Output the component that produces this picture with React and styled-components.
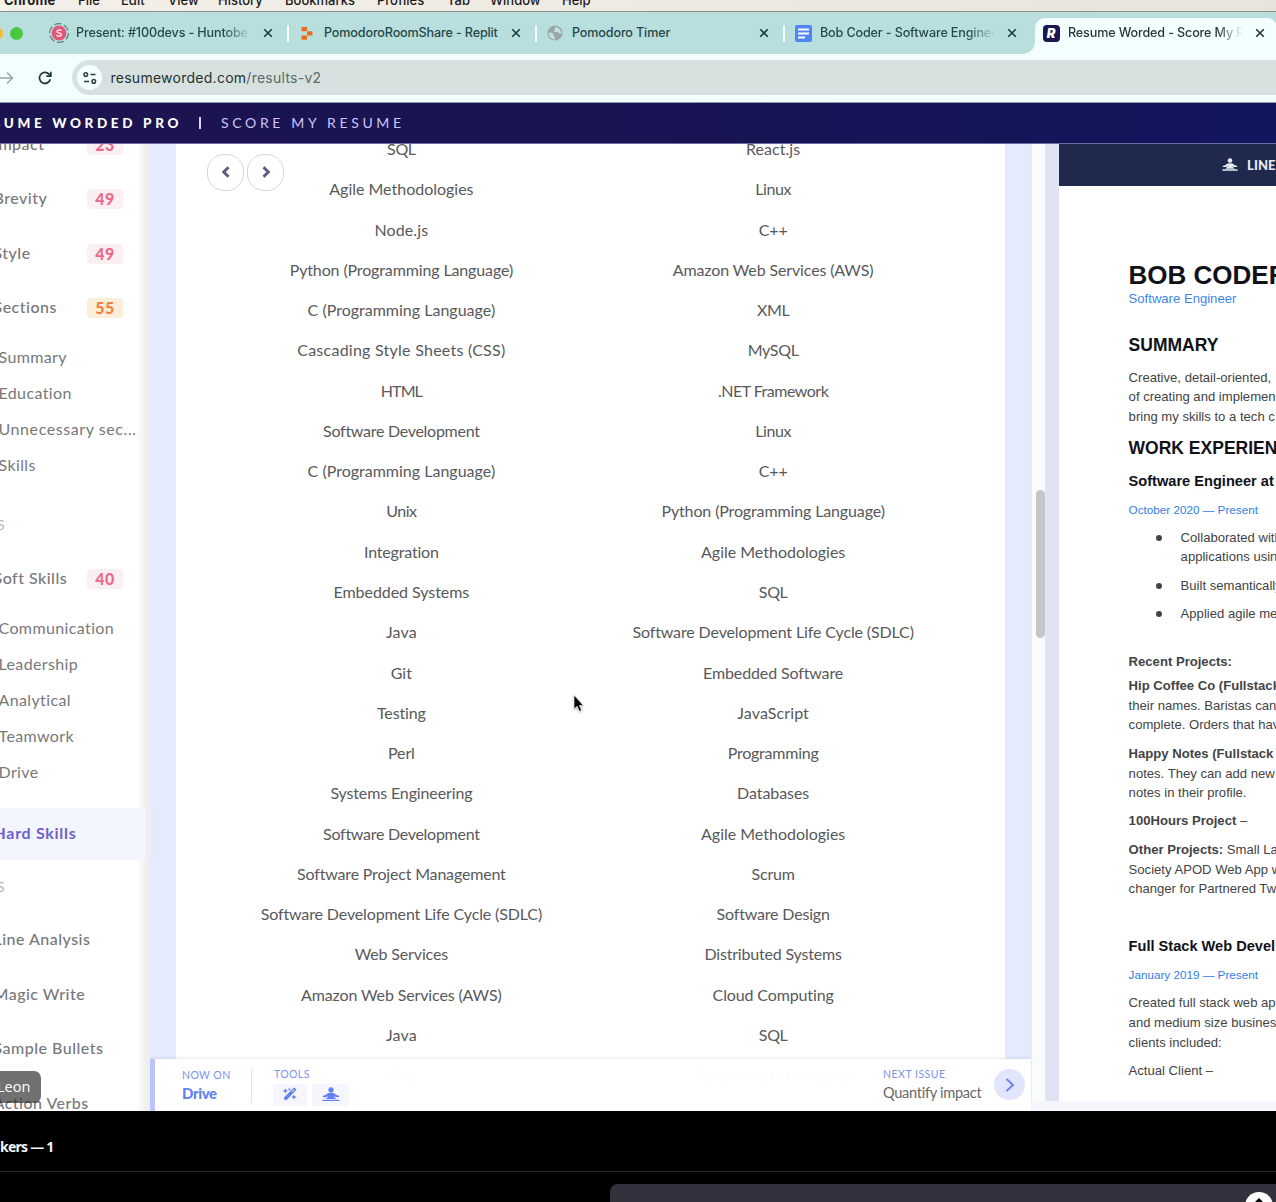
import React from "react";
import styled, { createGlobalStyle } from "styled-components";
import { FaWandMagicSparkles } from "react-icons/fa6";

const SITE = '"Lato", "Liberation Sans", sans-serif';
const CHROME = '"Inter", "Liberation Sans", sans-serif';

const GlobalStyle = createGlobalStyle`
  *, *::before, *::after { box-sizing: border-box; }
  html, body { margin: 0; padding: 0; background: #000; overflow: hidden; }
  ul { list-style: none; margin: 0; padding: 0; }
  button { border: 0; padding: 0; background: none; font: inherit; }
  svg { display: block; flex: none; }
`;

const Page = styled.div`
  display: flex;
  flex-direction: column;
  width: 1276px;
  height: 1202px;
  overflow: hidden;
  background: #000;
`;

/* ---------- macOS menu bar ---------- */
const MenuBar = styled.header`
  display: flex;
  align-items: flex-end;
  flex: none;
  height: 12px;
  padding-bottom: 3.5px;
  gap: 22px;
  overflow: hidden;
  background: linear-gradient(90deg, #f3f0e9, #e8e4db);
  border-bottom: 1px solid #8a8f8c;
  font: 500 13px/16px ${CHROME};
  color: #1c1b1a;
`;
const MenuItem = styled.span`
  flex: none;
  width: ${(p) => p.$w}px;
  margin-left: ${(p) => p.$offset || 0}px;
  font-weight: ${(p) => (p.$strong ? 700 : 500)};
  letter-spacing: ${(p) => (p.$strong ? 0.2 : 0)}px;
  white-space: nowrap;
`;

/* ---------- Browser chrome ---------- */
const TabStrip = styled.nav`
  display: flex;
  align-items: flex-end;
  flex: none;
  height: 42px;
  background: #b8dfdd;
`;
const WindowControls = styled.div`
  display: flex;
  align-items: center;
  gap: 7px;
  width: 39px;
  height: 42px;
  flex: none;
`;
const Light = styled.span`
  flex: none;
  width: 13px;
  height: 13px;
  margin-left: ${(p) => p.$shift || 0}px;
  border-radius: 50%;
  background: ${(p) => p.$color};
`;
const Tab = styled.div`
  display: flex;
  align-items: center;
  flex: none;
  position: relative;
  width: 248px;
  height: 42px;
  padding-left: 12px;
  color: #27484a;
`;
const ActiveTab = styled(Tab)`
  width: 242px;
  height: 36px;
  padding-left: 8px;
  padding-bottom: 6px;
  margin-left: 4px;
  border-radius: 10px 10px 0 0;
  background: #f2fffe;
  color: #26383a;
  &::before {
    content: "";
    position: absolute;
    left: -12px;
    bottom: 0;
    width: 12px;
    height: 12px;
    background: radial-gradient(circle at 0 0, transparent 11.5px, #f2fffe 12px);
  }
`;
const TabIcon = styled.span`
  display: flex;
  align-items: center;
  justify-content: center;
  flex: none;
  width: 16px;
  height: 16px;
  margin-right: 9px;
`;
const TabTitle = styled.span`
  flex: none;
  width: 175px;
  margin-right: -2px;
  overflow: hidden;
  white-space: nowrap;
  font: 500 12.6px/18px ${CHROME};
  letter-spacing: -0.15px;
  mask-image: ${(p) => (p.$fade ? "linear-gradient(90deg, #000 148px, transparent 175px)" : "none")};
`;
const TabClose = styled.button`
  flex: none;
  margin-left: 13.5px;
  color: #1d3a3c;
`;
const TabDivider = styled.span`
  flex: none;
  width: 2px;
  height: 17px;
  margin-left: 14px;
  border-radius: 1px;
  background: #f6ffff;
`;
const ResumeFavicon = styled.span`
  display: flex;
  align-items: center;
  justify-content: center;
  flex: none;
  width: 17px;
  height: 17px;
  border-radius: 4px;
  background: #1b1550;
  color: #fff;
  font: italic 900 13px/17px ${CHROME};
`;
const Toolbar = styled.div`
  display: flex;
  align-items: center;
  flex: none;
  height: 49px;
  padding-bottom: 1px;
  background: #f2fffe;
  border-bottom: 1px solid #8b9a9f;
`;
const NavIcons = styled.div`
  display: flex;
  align-items: center;
  gap: 24px;
  width: 72px;
  flex: none;
`;
const AddressBar = styled.div`
  display: flex;
  align-items: center;
  flex: 1;
  height: 35px;
  padding-left: 5px;
  border-radius: 18px 0 0 18px;
  background: #d6e1e0;
`;
const SiteInfo = styled.button`
  display: flex;
  align-items: center;
  justify-content: center;
  width: 25px;
  height: 25px;
  border-radius: 50%;
  background: #f2fffe;
`;
const Url = styled.span`
  margin-left: 8.5px;
  font: 400 14px/20px ${CHROME};
  letter-spacing: 0.26px;
  color: #24312f;
  span { color: #5d6a69; }
`;

/* ---------- Site banner ---------- */
const Banner = styled.div`
  display: flex;
  align-items: center;
  flex: none;
  height: 41px;
  background: linear-gradient(90deg, #1b1451 0%, #1a1452 45%, #11165e 100%);
  border-bottom: 1px solid #6e67a0;
  font: 400 14px/18px ${SITE};
  color: #cdc5fb;
`;
const Brand = styled.strong`
  display: flex;
  justify-content: flex-end;
  flex: none;
  width: 182px;
  color: #fff;
  font-weight: 900;
  font-size: 13.5px;
  letter-spacing: 3.65px;
  white-space: nowrap;
  overflow: hidden;
`;
const BannerRule = styled.span`
  width: 1.5px;
  height: 12px;
  margin: 0 20.5px 0 17px;
  background: #dcd7f5;
`;
const BannerTitle = styled.span`
  letter-spacing: 3.65px;
  white-space: nowrap;
`;

/* ---------- Workspace ---------- */
const Workspace = styled.div`
  display: flex;
  flex: none;
  position: relative;
  height: 967px;
  overflow: hidden;
  background: #fff;
`;
const Sidebar = styled.aside`
  flex: none;
  width: 150px;
  height: 967px;
  overflow: hidden;
  background: linear-gradient(90deg, #fff 136px, #efefef 146px, #efefef 150px);
  font-family: ${SITE};
  color: #77787b;
`;
const SideNav = styled.div`
  margin-top: -26.75px;
`;
const SideItem = styled.div`
  display: flex;
  align-items: center;
  width: 145px;
  height: ${(p) => (p.$active ? 52.5 : 54.5)}px;
  margin-top: ${(p) => (p.$active ? 16.5 : 0)}px;
  padding-right: 22px;
  background: ${(p) => (p.$active ? "#f3f6ff" : "transparent")};
  color: ${(p) => (p.$active ? "#6f5fcb" : "inherit")};
  font-weight: ${(p) => (p.$active ? 700 : 500)};
  letter-spacing: ${(p) => (p.$active ? 0.7 : 0.48)}px;
`;
const SideLabel = styled.span`
  flex: 1;
  margin-left: -6.5px;
  padding-bottom: 2px;
  font-size: 16px;
  line-height: 20px;
  white-space: nowrap;
`;
const Score = styled.span`
  flex: none;
  width: 36px;
  height: 20px;
  border-radius: 4px;
  background: ${(p) => (p.$warm ? "#fdeeda" : "#fbf0f1")};
  color: ${(p) => (p.$warm ? "#ee8440" : "#ea6a90")};
  font: 900 16px/20px ${SITE};
  letter-spacing: 0.4px;
  text-align: center;
`;
const SubList = styled.ul`
  padding-top: 5px;
`;
const SubItem = styled.li`
  height: 36px;
  margin-left: -1.5px;
  font-size: 16px;
  line-height: 34px;
  letter-spacing: ${(p) => (p.$wide ? 0.58 : 0.38)}px;
  white-space: nowrap;
`;
const SideHeading = styled.div`
  display: flex;
  align-items: center;
  height: ${(p) => p.$h}px;
  padding-top: ${(p) => p.$top}px;
  margin-left: -3px;
  font-size: 14px;
  color: #b3b4b6;
`;
const NameTag = styled.div`
  position: absolute;
  left: -8px;
  top: 927px;
  width: 49px;
  height: 32px;
  padding-left: 5px;
  border-radius: 7px;
  background: rgba(40, 40, 40, 0.66);
  color: #fff;
  font: 400 14.5px/31px "Open Sans", "Noto Sans", sans-serif;
`;

const Main = styled.main`
  display: flex;
  flex: none;
  position: relative;
  width: 881px;
  height: 967px;
  padding: 0 26px;
  overflow: hidden;
  background: #e6eaff;
`;
const Card = styled.section`
  flex: 1;
  padding: 0 46px 0 39.5px;
  background: #fff;
`;
const SkillTable = styled.div`
  margin-top: -15.05px;
  font: 400 16px/20px ${SITE};
  color: #58595b;
`;
const SkillRow = styled.div`
  display: grid;
  grid-template-columns: 1fr 1fr;
  align-items: center;
  height: 40.28px;
  text-align: center;
`;
const SkillName = styled.span`
  letter-spacing: ${(p) => p.$track}px;
  white-space: nowrap;
`;
const Pager = styled.div`
  display: flex;
  gap: 3px;
  position: absolute;
  left: 57px;
  top: 10px;
`;
const PagerButton = styled.button`
  display: flex;
  align-items: center;
  justify-content: center;
  width: 37px;
  height: 37px;
  padding-bottom: 1px;
  border: 1px solid #d6d7dc;
  border-radius: 17px;
  background: #fff;
  color: #5c5f80;
`;
const Dock = styled.footer`
  display: flex;
  align-items: flex-start;
  position: absolute;
  left: 0;
  bottom: 0;
  width: 881px;
  height: 52px;
  padding-left: 27px;
  border-left: 5px solid #bac5fd;
  background: rgba(255, 255, 255, 0.98);
  box-shadow: 0 -1px 3px rgba(60, 60, 90, 0.12);
  font-family: ${SITE};
`;
const DockGroup = styled.div`
  flex: none;
  width: ${(p) => p.$w}px;
  padding-top: 8px;
  margin-left: ${(p) => p.$left || 0}px;
`;
const DockLabel = styled.div`
  height: 15px;
  font-size: 10.5px;
  line-height: ${(p) => p.$lh || 15}px;
  letter-spacing: ${(p) => p.$track}px;
  color: #7b92f0;
  white-space: nowrap;
`;
const DockValue = styled.div`
  padding-top: 1px;
  font-size: ${(p) => (p.$strong ? 15 : 14.6)}px;
  line-height: 20px;
  font-weight: ${(p) => (p.$strong ? 900 : 400)};
  letter-spacing: ${(p) => (p.$strong ? -0.4 : -0.3)}px;
  color: ${(p) => (p.$strong ? "#6382f1" : "#67686b")};
  white-space: nowrap;
`;
const DockRule = styled.span`
  width: 1px;
  height: 34px;
  margin-top: 10px;
  background: #dfe2f3;
`;
const ToolButtons = styled.div`
  display: flex;
  gap: 5px;
  padding-top: 2px;
  margin-left: -1px;
`;
const ToolButton = styled.button`
  display: flex;
  align-items: center;
  justify-content: center;
  width: ${(p) => p.$w}px;
  height: 22px;
  padding-bottom: 2px;
  border-radius: 2px;
  background: #f6f6fe;
  color: #6382f1;
`;
const NextButton = styled.button`
  display: flex;
  align-items: center;
  justify-content: center;
  width: 31px;
  height: 31px;
  margin: 10px 0 0 12px;
  border-radius: 50%;
  background: #e2e5fe;
  color: #6b83f3;
`;
const Pointer = styled.svg`
  position: absolute;
  left: 572px;
  top: 550px;
  filter: drop-shadow(0 1px 1px rgba(0, 0, 0, 0.3));
`;

const Side = styled.div`
  display: flex;
  flex-direction: column;
  flex: 1;
  min-width: 0;
  background: #f4f6fb;
`;
const Viewer = styled.div`
  display: flex;
  height: 957px;
`;
const ScrollTrack = styled.div`
  flex: none;
  width: 15px;
  padding: 345.5px 1px 0 3.5px;
  background: #fafcfb;
  border-left: 1px solid #e9ebf0;
  border-right: 1px solid #e6e8ea;
`;
const ScrollThumb = styled.div`
  width: 9px;
  height: 148px;
  border-radius: 5px;
  background: #c5c7c6;
`;
const Gutter = styled.div`
  flex: none;
  width: 13px;
  background: #dfe4f3;
`;
const ResumePane = styled.div`
  flex: 1;
  min-width: 0;
  overflow: hidden;
  background: #fff;
`;
const ResumeBar = styled.div`
  display: flex;
  align-items: center;
  gap: 9px;
  height: 42px;
  padding-left: 163px;
  background: #1e294d;
  color: #e6e9f3;
  font: 900 13px/18px ${SITE};
  letter-spacing: 0.1px;
  white-space: nowrap;
`;
const Paper = styled.article`
  padding-left: 69.6px;
  white-space: nowrap;
  font: 400 13.1px/19.75px "Liberation Sans", Arial, sans-serif;
  color: #434345;
`;
const Name = styled.h1`
  margin: 74px 0 0;
  font-size: 26px;
  line-height: 30px;
  color: #111218;
`;
const Role = styled.div`
  margin-top: -1.5px;
  line-height: 20px;
  color: #3f86ea;
`;
const Heading = styled.h2`
  margin: ${(p) => p.$mt}px 0 0;
  font-size: 17.5px;
  line-height: 24px;
  color: #111218;
`;
const Job = styled.h3`
  margin: ${(p) => p.$mt}px 0 0;
  font-size: 14.6px;
  line-height: 20px;
  color: #111218;
`;
const Dates = styled.div`
  margin-top: 9px;
  font-size: 11.7px;
  line-height: 20px;
  color: #2f7fe6;
`;
const Para = styled.p`
  margin: ${(p) => p.$mt}px 0 0;
`;
const Line = styled.span`
  display: block;
`;
const Bullet = styled.li`
  display: flex;
  margin-top: ${(p) => p.$mt}px;
  padding-left: 27px;
  &::before {
    content: "";
    flex: none;
    width: 6px;
    height: 6px;
    margin: 7.5px 19px 0 0;
    border-radius: 50%;
    background: #434345;
  }
`;

/* ---------- Call window below the shared screen ---------- */
const CallInfo = styled.div`
  flex: none;
  height: 61px;
  border-bottom: 1px solid #2a2a2c;
  color: #f4f4f6;
  font: 700 14px/71px "Noto Sans", "Open Sans", sans-serif;
  letter-spacing: -0.75px;
`;
const CallFooter = styled.div`
  display: flex;
  justify-content: flex-end;
  flex: 1;
  padding-top: 12px;
`;
const Composer = styled.div`
  display: flex;
  justify-content: flex-end;
  width: 666px;
  padding: 8px 3px 0 0;
  border-radius: 8px 0 0 0;
  background: #31323e;
`;
const SendButton = styled.button`
  display: flex;
  justify-content: center;
  width: 28px;
  height: 28px;
  padding-top: 6px;
  border-radius: 50%;
  background: #fff;
`;

const skills = [
  ["SQL", "React.js"],
  ["Agile Methodologies", "Linux"],
  ["Node.js", "C++"],
  ["Python (Programming Language)", "Amazon Web Services (AWS)"],
  ["C (Programming Language)", "XML"],
  ["Cascading Style Sheets (CSS)", "MySQL"],
  ["HTML", ".NET Framework"],
  ["Software Development", "Linux"],
  ["C (Programming Language)", "C++"],
  ["Unix", "Python (Programming Language)"],
  ["Integration", "Agile Methodologies"],
  ["Embedded Systems", "SQL"],
  ["Java", "Software Development Life Cycle (SDLC)"],
  ["Git", "Embedded Software"],
  ["Testing", "JavaScript"],
  ["Perl", "Programming"],
  ["Systems Engineering", "Databases"],
  ["Software Development", "Agile Methodologies"],
  ["Software Project Management", "Scrum"],
  ["Software Development Life Cycle (SDLC)", "Software Design"],
  ["Web Services", "Distributed Systems"],
  ["Amazon Web Services (AWS)", "Cloud Computing"],
  ["Java", "SQL"],
  ["XML", "Requirements Analysis"],
];

const tracking = {
  "Agile Methodologies": -0.01,
  "Node.js": 0.1,
  "C (Programming Language)": 0.01,
  "Cascading Style Sheets (CSS)": 0.25,
  HTML: -0.9,
  "Software Development": -0.28,
  ".NET Framework": -0.5,
  "Embedded Systems": -0.05,
  Unix: -0.5,
  Linux: -0.4,
  SQL: -0.4,
  MySQL: -0.35,
  XML: -0.4,
  Integration: -0.19,
  JavaScript: 0.1,
  Java: 0.1,
  Git: 0.1,
  Perl: -0.1,
  "React.js": 0.05,
  Programming: -0.22,
  Databases: -0.05,
  Scrum: -0.2,
  "Software Project Management": -0.18,
  "Software Design": -0.18,
  "Distributed Systems": -0.18,
};

const menus = [
  ["File", 21],
  ["Edit", 25],
  ["View", 28],
  ["History", 45],
  ["Bookmarks", 70],
  ["Profiles", 48],
  ["Tab", 21],
  ["Window", 50],
  ["Help", 28],
];

const CloseIcon = () => (
  <svg width="10" height="10" viewBox="0 0 10 10" fill="none" stroke="currentColor" strokeWidth="1.6">
    <path d="M1.2 1.2l7.6 7.6M8.8 1.2L1.2 8.8" />
  </svg>
);

const StreamIcon = () => (
  <svg width="20" height="20" viewBox="0 0 20 20">
    <circle cx="10" cy="10" r="9.4" fill="none" stroke="#5a7d80" strokeWidth="1.2" strokeDasharray="7 2.8" />
    <circle cx="10" cy="10" r="7.4" fill="#e25778" />
    <path d="M12.3 7.7c-.6-1-4.4-1.2-4.4.7 0 2 4.5 1.2 4.5 3.2 0 2-4 1.9-4.9.6" fill="none" stroke="#fbdfe6" strokeWidth="1.5" />
  </svg>
);

const ReplitIcon = () => (
  <svg width="12" height="13" viewBox="0 0 12 13" fill="#ee6a1b">
    <rect x="0.5" y="0" width="5.5" height="4.2" rx="0.8" />
    <rect x="6" y="4.3" width="5.5" height="4.2" rx="0.8" />
    <rect x="0.5" y="8.6" width="5.5" height="4.2" rx="0.8" />
  </svg>
);

const GlobeIcon = () => (
  <svg width="16" height="16" viewBox="0 0 16 16">
    <circle cx="8" cy="8" r="7.5" fill="#98a5ab" />
    <path d="M1.8 7.5l3 .3 2 1.5-.5 1.7 1.6 1 .2 2.6A6.2 6.2 0 0 1 1.8 7.5zM9 2l-1.5 1.3.4 1.6-1.6 1 1.9 1.3 2.6-.2 1.2 1.6 2.2.2A6.3 6.3 0 0 0 9 2z" fill="#c3dedd" />
  </svg>
);

const DocsIcon = () => (
  <svg width="17" height="17" viewBox="0 0 17 17">
    <rect width="17" height="17" rx="2" fill="#4f86f3" />
    <path d="M3 4.5h11M3 8.5h11M3 12.5h7" stroke="#fff" strokeWidth="1.9" />
  </svg>
);

const PersonIcon = ({ size = 18 }) => (
  <svg width={size} height={size * 0.83} viewBox="0 0 18 15" fill="currentColor">
    <circle cx="9" cy="2.8" r="2.6" />
    <path d="M9 5.8c1.7 0 2.9.3 3.9 1.1l1.1 1 2.8.9c.7.3.5 1.4-.2 1.4l-3.3-.1-1.3-.8v.9l1.5.7c.7.6.4 1.2-.4 1.2H4.900c-.8 0-1.100-.6-.4-1.200l1.500-.7v-.9l-1.300.8-3.300.1c-.7 0-.9-1.100-.2-1.400L4 7.900l1.100-1c1-.8 2.200-1.100 3.900-1.100z" />
    <rect x="0.4" y="12.8" width="17.2" height="1.7" rx="0.5" />
  </svg>
);

const Chevron = ({ d, w, h, stroke }) => (
  <svg width={w} height={h} viewBox={`0 0 ${w} ${h}`} fill="none" stroke="currentColor" strokeWidth={stroke}>
    <path d={d} />
  </svg>
);

function BrowserTab({ icon, title, fade, divider = true }) {
  return (
    <Tab>
      <TabIcon>{icon}</TabIcon>
      <TabTitle $fade={fade}>{title}</TabTitle>
      <TabClose aria-label="Close tab"><CloseIcon /></TabClose>
      {divider && <TabDivider />}
    </Tab>
  );
}

function NavItem({ label, score, warm, active }) {
  return (
    <SideItem $active={active}>
      <SideLabel>{label}</SideLabel>
      {score && <Score $warm={warm}>{score}</Score>}
    </SideItem>
  );
}

function SubNav({ items }) {
  return (
    <SubList>
      {items.map((item) => <SubItem key={item} $wide={item.endsWith("...")}>{item}</SubItem>)}
    </SubList>
  );
}

function Skill({ name }) {
  return <SkillName $track={tracking[name] ?? -0.13}>{name}</SkillName>;
}

function Lines({ items }) {
  return items.map((line, i) => <Line key={i}>{line}</Line>);
}

export default function App() {
  return (
    <Page>
      <GlobalStyle />
      <MenuBar>
        <MenuItem $strong $w={52} $offset={4}>Chrome</MenuItem>
        {menus.map(([name, w]) => <MenuItem key={name} $w={w}>{name}</MenuItem>)}
      </MenuBar>

      <TabStrip>
        <WindowControls>
          <Light $color="#f5bd2e" $shift={-10} />
          <Light $color="#48c93f" />
        </WindowControls>
        <BrowserTab icon={<StreamIcon />} title="Present: #100devs - Huntobe" fade />
        <BrowserTab icon={<ReplitIcon />} title="PomodoroRoomShare - Replit" />
        <BrowserTab icon={<GlobeIcon />} title="Pomodoro Timer" />
        <BrowserTab icon={<DocsIcon />} title="Bob Coder - Software Enginee" fade divider={false} />
        <ActiveTab>
          <TabIcon><ResumeFavicon>R</ResumeFavicon></TabIcon>
          <TabTitle $fade>Resume Worded - Score My R</TabTitle>
          <TabClose aria-label="Close tab"><CloseIcon /></TabClose>
        </ActiveTab>
      </TabStrip>

      <Toolbar>
        <NavIcons>
          <svg width="14" height="14" viewBox="0 0 14 14" fill="none" stroke="#97a6a6" strokeWidth="1.5">
            <path d="M0 7h12.5M7 1.5L12.5 7 7 12.5" />
          </svg>
          <svg width="14" height="14" viewBox="0 0 14 14" fill="none" stroke="#1d3b3b" strokeWidth="1.7">
            <path d="M12.3 8.2A5.5 5.5 0 1 1 11 3.2l1.2 1.3" />
            <path d="M12.8.8v4.4H8.3" />
          </svg>
        </NavIcons>
        <AddressBar>
          <SiteInfo aria-label="Site information">
            <svg width="14" height="12" viewBox="0 0 14 12" fill="none" stroke="#2a3f3f" strokeWidth="1.5">
              <circle cx="2.8" cy="2.6" r="1.8" />
              <path d="M7.5 2.6h5M1 9.4h5" />
              <circle cx="10.8" cy="9.4" r="1.8" />
            </svg>
          </SiteInfo>
          <Url>resumeworded.com<span>/results-v2</span></Url>
        </AddressBar>
      </Toolbar>

      <Banner>
        <Brand>RESUME WORDED PRO</Brand>
        <BannerRule />
        <BannerTitle>SCORE MY RESUME</BannerTitle>
      </Banner>

      <Workspace>
        <Sidebar>
          <SideNav>
            <NavItem label="Impact" score="23" />
            <NavItem label="Brevity" score="49" />
            <NavItem label="Style" score="49" />
            <NavItem label="Sections" score="55" warm />
            <SubNav items={["Summary", "Education", "Unnecessary sec...", "Skills"]} />
            <SideHeading $h={67.25} $top={13.5}>S</SideHeading>
            <NavItem label="Soft Skills" score="40" />
            <SubNav items={["Communication", "Leadership", "Analytical", "Teamwork", "Drive"]} />
            <NavItem label="Hard Skills" active />
            <SideHeading $h={52.75} $top={0}>S</SideHeading>
            <NavItem label="Line Analysis" />
            <NavItem label="Magic Write" />
            <NavItem label="Sample Bullets" />
            <NavItem label="Action Verbs" />
          </SideNav>
        </Sidebar>

        <Main>
          <Card>
            <SkillTable>
              {skills.map(([left, right], i) => (
                <SkillRow key={i}>
                  <Skill name={left} />
                  <Skill name={right} />
                </SkillRow>
              ))}
            </SkillTable>
          </Card>
          <Pager>
            <PagerButton aria-label="Previous">
              <Chevron w={10} h={12} stroke={3} d="M7.5 1.2L2.7 6l4.8 4.8" />
            </PagerButton>
            <PagerButton aria-label="Next">
              <Chevron w={10} h={12} stroke={3} d="M2.5 1.2L7.3 6l-4.8 4.8" />
            </PagerButton>
          </Pager>
          <Dock>
            <DockGroup $w={69}>
              <DockLabel $track={0.4} $lh={16}>NOW ON</DockLabel>
              <DockValue $strong>Drive</DockValue>
            </DockGroup>
            <DockRule />
            <DockGroup $w={609} $left={22}>
              <DockLabel $track={0.4}>TOOLS</DockLabel>
              <ToolButtons>
                <ToolButton $w={34} aria-label="Magic write"><FaWandMagicSparkles size={14} /></ToolButton>
                <ToolButton $w={37} aria-label="Line analysis"><PersonIcon /></ToolButton>
              </ToolButtons>
            </DockGroup>
            <DockGroup $w={99}>
              <DockLabel $track={0.5}>NEXT ISSUE</DockLabel>
              <DockValue>Quantify impact</DockValue>
            </DockGroup>
            <NextButton aria-label="Next issue">
              <Chevron w={10} h={14} stroke={2} d="M1.5 1L8 7l-6.5 6" />
            </NextButton>
          </Dock>
        </Main>

        <Side>
          <Viewer>
            <ScrollTrack><ScrollThumb /></ScrollTrack>
            <Gutter />
            <ResumePane>
              <ResumeBar><PersonIcon size={16} />LINE</ResumeBar>
              <Paper>
                <Name>BOB CODER</Name>
                <Role>Software Engineer</Role>
                <Heading $mt={24.5}>SUMMARY</Heading>
                <Para $mt={10.6}>
                  <Lines items={["Creative, detail-oriented,", "of creating and implemen", "bring my skills to a tech c"]} />
                </Para>
                <Heading $mt={9.1}>WORK EXPERIENCE</Heading>
                <Job $mt={11}>Software Engineer at</Job>
                <Dates>October 2020 — Present</Dates>
                <ul>
                  <Bullet $mt={7.6}><div><Lines items={["Collaborated with", "applications using"]} /></div></Bullet>
                  <Bullet $mt={8.5}>Built semantically</Bullet>
                  <Bullet $mt={8.7}>Applied agile me</Bullet>
                </ul>
                <Para $mt={28.2}><b>Recent Projects:</b></Para>
                <Para $mt={4.2}>
                  <Lines items={[<b>Hip Coffee Co (Fullstack</b>, "their names. Baristas can", "complete. Orders that hav"]} />
                </Para>
                <Para $mt={8.8}>
                  <Lines items={[<b>Happy Notes (Fullstack</b>, "notes. They can add new", "notes in their profile."]} />
                </Para>
                <Para $mt={8.3}><b>100Hours Project</b> –</Para>
                <Para $mt={8.8}>
                  <Lines items={[<><b>Other Projects:</b> Small La</>, "Society APOD Web App w", "changer for Partnered Tw"]} />
                </Para>
                <Job $mt={37.1}>Full Stack Web Devel</Job>
                <Dates>January 2019 — Present</Dates>
                <Para $mt={7.8}>
                  <Lines items={["Created full stack web ap", "and medium size busines", "clients included:"]} />
                </Para>
                <Para $mt={8.5}>Actual Client –</Para>
              </Paper>
            </ResumePane>
          </Viewer>
        </Side>

        <NameTag>Leon</NameTag>
        <Pointer width="12" height="19" viewBox="0 0 12 19">
          <path d="M2 1v14.2l3.1-2.9 2.2 5 2.3-1-2.2-4.9h4z" fill="#000" stroke="#fff" strokeWidth="0.7" />
        </Pointer>
      </Workspace>

      <CallInfo>kers — 1</CallInfo>
      <CallFooter>
        <Composer>
          <SendButton aria-label="Send">
            <svg width="12" height="12" viewBox="0 0 12 12"><path d="M6 0l6 6v6H0V6z" fill="#000" /></svg>
          </SendButton>
        </Composer>
      </CallFooter>
    </Page>
  );
}
